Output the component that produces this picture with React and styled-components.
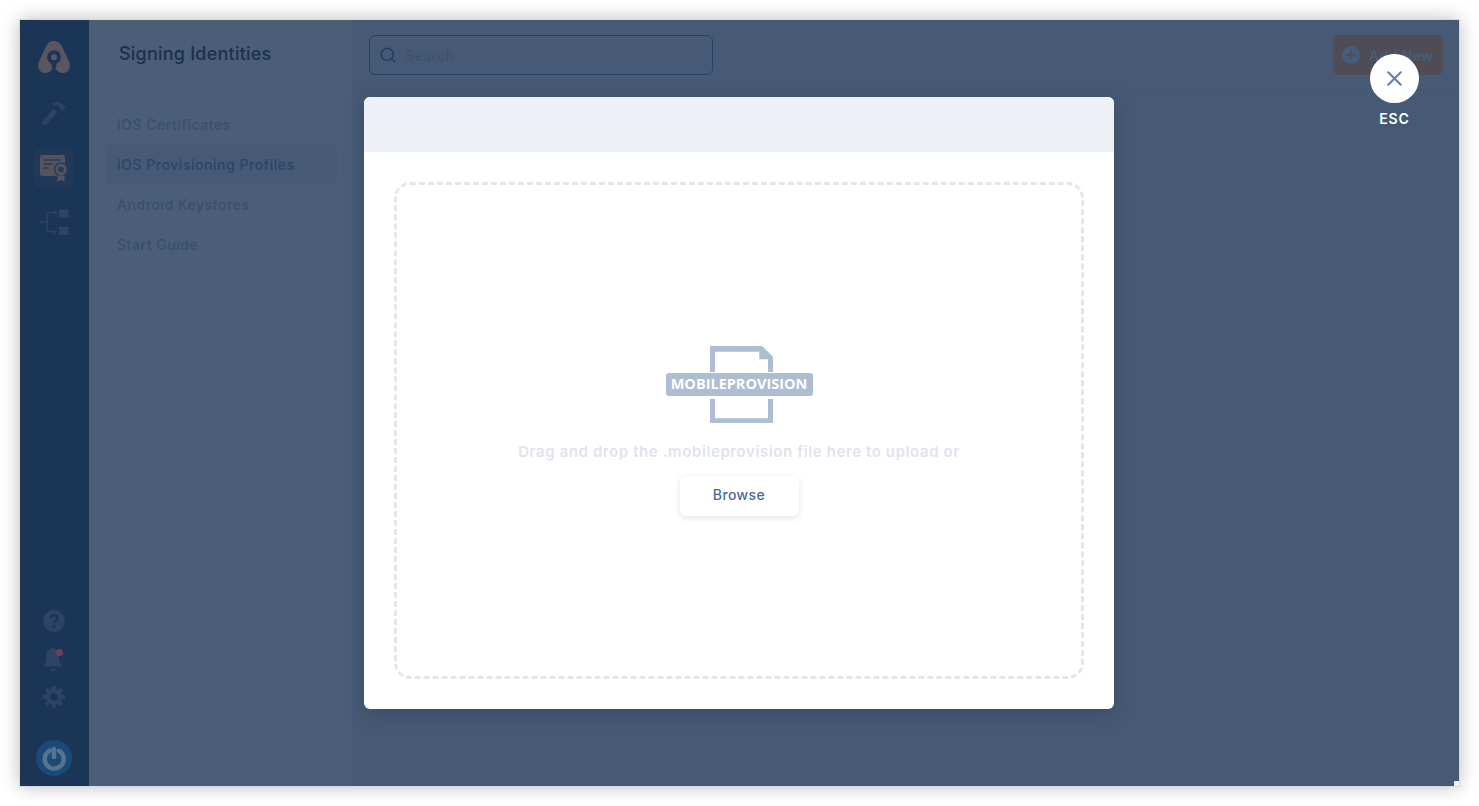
import styled, { createGlobalStyle } from 'styled-components';
import { FiSearch, FiX } from 'react-icons/fi';

const GlobalStyle = createGlobalStyle`
  html, body {
    margin: 0;
    height: 100%;
    background: #fff;
    overflow: hidden;
  }
  body {
    font-family: Inter, "Liberation Sans", sans-serif;
    -webkit-font-smoothing: antialiased;
  }
`;

const menu = ['iOS Certificates', 'iOS Provisioning Profiles', 'Android Keystores', 'Start Guide'];

function Logo() {
  return (
    <svg width="32" height="32" viewBox="0 0 32 32">
      <path fill="#5a5560" d="M16 0c-4 0-6.300 2.200-8 5.500L.9 20.500C-1.600 26.500 2 32 7.300 32c3.300 0 6-1.800 7.200-4.800h3c1.200 3 3.900 4.800 7.200 4.800 5.300 0 8.900-5.500 6.400-11.500L24 5.500C22.300 2.200 20 0 16 0z" />
      <path fill="#1a3556" d="M16 9.500a6.800 6.800 0 0 0-2.800 13l1.100 5h3.400l1.100-5A6.800 6.800 0 0 0 16 9.500z" />
      <circle cx="16" cy="16.300" r="3" fill="#5a5560" />
    </svg>
  );
}

function Hammer() {
  return (
    <svg width="26" height="26" viewBox="0 0 26 26">
      <path fill="#2d4464" d="M1.800 20.800 12.600 8.700l4 3.700L5.400 24.300a2.500 2.500 0 0 1-3.600-3.500z" />
      <path fill="#2d4464" d="M10.500 4.500C13.500 1.200 17.500 1 20 3.200l1.500 1.600.8-.5 2.700 2.600-3.900 4-2.500-2.600.4-1-1.200-1c-2-1.200-4-1.300-6.800-1.800z" />
    </svg>
  );
}

function Certificate() {
  return (
    <svg width="28" height="28" viewBox="0 0 28 28">
      <rect x="0" y="1" width="25" height="21" rx="2" fill="#56525e" />
      <path stroke="#263c5b" strokeWidth="1.600" d="M3.500 6H21M3.500 10h9M3.500 14h5" />
      <circle cx="21" cy="15.500" r="6.500" fill="#56525e" stroke="#263c5b" strokeWidth="1.500" />
      <circle cx="21" cy="15.500" r="2.800" fill="#263c5b" />
      <path fill="#56525e" d="M17.500 21.500h7V28L21 25.800 17.500 28z" />
    </svg>
  );
}

function Flow() {
  return (
    <svg width="30" height="26" viewBox="0 0 30 26">
      <path fill="none" stroke="#2d4464" strokeWidth="1.500" d="M0 13h8M8 5.500a2 2 0 0 1 2-2h6M8 20.500a2 2 0 0 0 2 2h6M8 5.500v15" />
      <path fill="#2d4464" d="M15 1l3.500 2.500L15 6zM15 20l3.500 2.500L15 25zM20 .500h9.500v8H20zM20 18h9.500v8H20z" />
    </svg>
  );
}

function Help() {
  return (
    <svg width="22" height="22" viewBox="0 0 22 22">
      <circle cx="11" cy="11" r="11" fill="#2d4464" />
      <path fill="none" stroke="#1a3556" strokeWidth="2.200" d="M7.500 8.300c0-2 1.500-3.200 3.500-3.200s3.500 1.200 3.500 3c0 2.600-3.500 2.600-3.500 5.200" />
      <circle cx="11" cy="16.500" r="1.400" fill="#1a3556" />
    </svg>
  );
}

function Bell() {
  return (
    <svg width="24" height="24" viewBox="0 0 24 24">
      <path fill="#2d4464" d="M11 .500c1 0 1.800.8 1.800 1.700 3 1 4.200 3.800 4.200 7v4c0 2 2 3.500 3 5v1H1v-1c1-1.500 3-3 3-5v-4c0-3.200 1.200-6 4.200-7C8.200 1.300 10 .500 11 .500z" />
      <path fill="#2d4464" d="M8.500 21.500h5a2.500 2.500 0 0 1-5 0z" />
      <circle cx="17.500" cy="5.500" r="3.500" fill="#6e3f56" />
    </svg>
  );
}

function Gear() {
  return (
    <svg width="22" height="22" viewBox="0 0 22 22">
      <circle cx="11" cy="11" r="6" fill="none" stroke="#2d4464" strokeWidth="4.500" />
      <path stroke="#2d4464" strokeWidth="4" d="M11 0v4M11 18v4M0 11h4M18 11h4M3.200 3.200l2.800 2.800M16 16l2.800 2.800M3.200 18.800 6 16M16 6l2.800-2.800" />
    </svg>
  );
}

function Power() {
  return (
    <svg width="36" height="36" viewBox="0 0 36 36">
      <circle cx="18" cy="18" r="18" fill="#1b4a78" />
      <path fill="none" stroke="#56738f" strokeWidth="4.500" strokeLinecap="round" d="M14 10.500a9.500 9.500 0 1 0 9 .3" />
      <path stroke="#56738f" strokeWidth="4.500" strokeLinecap="round" d="M18 9v8" />
    </svg>
  );
}

function PlusCircle() {
  return (
    <svg width="18" height="18" viewBox="0 0 18 18">
      <circle cx="9" cy="9" r="9" fill="#445d7c" />
      <path stroke="#4f4c55" strokeWidth="2" d="M9 4.500v9M4.500 9h9" />
    </svg>
  );
}

export default function App() {
  return (
    <Page>
      <GlobalStyle />
      <Window>
        <Rail>
          <RailLogo><Logo /></RailLogo>
          <RailIcon $h={38}><Hammer /></RailIcon>
          <RailActive><Certificate /></RailActive>
          <RailIcon $h={54} $top={7}><Flow /></RailIcon>
          <RailSpacer />
          <RailIcon $h={38}><Help /></RailIcon>
          <RailIcon $h={38}><Bell /></RailIcon>
          <RailIcon $h={38}><Gear /></RailIcon>
          <RailPower><Power /></RailPower>
        </Rail>

        <Panel>
          <PanelTitle>Signing Identities</PanelTitle>
          <Menu>
            {menu.map((item, i) => (
              <MenuItem key={item} $active={i === 1}>{item}</MenuItem>
            ))}
          </Menu>
        </Panel>

        <Main>
          <TopBar>
            <SearchBox>
              <FiSearch size={18} color="#1f3f68" strokeWidth={2.2} />
              <SearchText>Search</SearchText>
            </SearchBox>
            <AddButton><PlusCircle />Add New</AddButton>
          </TopBar>
        </Main>

        <Overlay>
          <Modal>
            <ModalHeader />
            <ModalBody>
              <DropZone>
                <FileBadge>
                  <FileIcon width="63" height="77" viewBox="0 0 63 77">
                    <path
                      fill="#adbdd2"
                      d="M0 0H52L63 10.700V26H58V13.300H49.300V5.700H5V26H0ZM0 53H5V72.300H58V53H63V76a1 1 0 0 1-1 1H1a1 1 0 0 1-1-1Z"
                    />
                  </FileIcon>
                  <BadgeLabel>MOBILEPROVISION</BadgeLabel>
                </FileBadge>
                <DropText>Drag and drop the .mobileprovision file here to upload or</DropText>
                <BrowseButton>Browse</BrowseButton>
              </DropZone>
            </ModalBody>
          </Modal>
        </Overlay>

        <EscWrap>
          <EscCircle><FiX size={25} color="#5f84ae" strokeWidth={2} /></EscCircle>
          <EscLabel>ESC</EscLabel>
        </EscWrap>
        <ResizeHandle />
      </Window>
    </Page>
  );
}

const Page = styled.div`
  height: 806px;
  padding: 20px;
  box-sizing: border-box;
`;

const Window = styled.div`
  position: relative;
  display: flex;
  width: 1439px;
  height: 766px;
  overflow: hidden;
  background: #475a75;
  box-shadow: 0 0 0 1px #d3dae5, 0 0 18px rgba(0, 0, 0, 0.28);
`;

const Rail = styled.div`
  width: 69px;
  flex: none;
  box-sizing: border-box;
  padding-right: 1px;
  display: flex;
  flex-direction: column;
  align-items: center;
  background: #1a3556;
`;

const RailLogo = styled.div`
  margin-top: 21px;
  height: 32px;
  display: flex;
`;

const RailIcon = styled.div`
  height: ${(p) => p.$h}px;
  margin-top: ${(p) => p.$top || 0}px;
  display: flex;
  align-items: center;
  justify-content: center;
  &:nth-child(2) {
    margin-top: 21px;
  }
`;

const RailActive = styled.div`
  width: 40px;
  height: 40px;
  margin-top: 16px;
  border-radius: 8px;
  background: #213857;
  display: flex;
  align-items: center;
  justify-content: center;
`;

const RailSpacer = styled.div`
  flex: 1;
`;

const RailPower = styled.div`
  height: 36px;
  margin: 24px 0 10px;
  display: flex;
`;

const Panel = styled.div`
  width: 264px;
  flex: none;
  background: #4a5e78;
  border-right: 1px solid #485b76;
  box-sizing: border-box;
`;

const PanelTitle = styled.h1`
  margin: 0;
  padding: 23px 0 0 30px;
  font-size: 18px;
  line-height: 22px;
  font-weight: 500;
  letter-spacing: 0.22px;
  color: #1c304c;
`;

const Menu = styled.div`
  margin: 39px 15px 0 16px;
  display: flex;
  flex-direction: column;
`;

const MenuItem = styled.div`
  height: 40px;
  display: flex;
  align-items: center;
  padding-left: 12px;
  border-radius: 6px;
  font-size: 14px;
  font-weight: 500;
  letter-spacing: 0.55px;
  color: ${(p) => (p.$active ? '#2b4468' : '#3a4f6d')};
  background: ${(p) => (p.$active ? '#465a76' : 'transparent')};
`;

const Main = styled.div`
  flex: 1;
  min-width: 0;
`;

const TopBar = styled.div`
  height: 70px;
  box-sizing: border-box;
  padding: 15px 16px 0 16px;
  border-bottom: 1px solid #465974;
  display: flex;
  justify-content: space-between;
  align-items: flex-start;
`;

const SearchBox = styled.div`
  width: 344px;
  height: 40px;
  box-sizing: border-box;
  border: 1px solid #24416a;
  border-radius: 6px;
  padding-left: 9px;
  display: flex;
  align-items: center;
  gap: 8px;
`;

const SearchText = styled.span`
  font-size: 14px;
  font-weight: 500;
  letter-spacing: 0.4px;
  color: #3d5270;
`;

const AddButton = styled.div`
  width: 110px;
  height: 40px;
  box-sizing: border-box;
  padding-left: 9px;
  border-radius: 6px;
  background: #4f4c55;
  color: #445d7c;
  display: flex;
  align-items: center;
  gap: 9px;
  font-size: 14px;
  font-weight: 600;
  letter-spacing: 0.45px;
`;

const Overlay = styled.div`
  position: absolute;
  inset: 0;
  padding-right: 1px;
  display: flex;
  align-items: center;
  justify-content: center;
`;

const Modal = styled.div`
  width: 750px;
  height: 612px;
  background: #fff;
  border-radius: 6px;
  overflow: hidden;
  display: flex;
  flex-direction: column;
  box-shadow: 0 4px 20px rgba(20, 35, 60, 0.25);
`;

const ModalHeader = styled.div`
  height: 55px;
  flex: none;
  background: #edf0f5;
`;

const ModalBody = styled.div`
  flex: 1;
  padding: 30px;
  display: flex;
`;

const DropZone = styled.div`
  flex: 1;
  box-sizing: border-box;
  border: 3px dashed #e4e6eb;
  border-radius: 16px;
  display: flex;
  flex-direction: column;
  align-items: center;
  justify-content: center;
`;

const FileBadge = styled.div`
  position: relative;
  width: 147px;
  height: 77px;
`;

const FileIcon = styled.svg`
  display: block;
  margin-left: 44px;
`;

const BadgeLabel = styled.span`
  position: absolute;
  left: 0;
  right: 0;
  top: 27px;
  height: 23px;
  border-radius: 3px;
  background: #adbdd2;
  color: #fff;
  font-family: "Open Sans", sans-serif;
  font-size: 14.5px;
  font-weight: 700;
  line-height: 21px;
  text-align: center;
  white-space: nowrap;
`;

const DropText = styled.div`
  margin-top: 19px;
  font-size: 15px;
  line-height: 20px;
  font-weight: 600;
  letter-spacing: 0.6px;
  white-space: nowrap;
  color: #dfe3ec;
`;

const BrowseButton = styled.div`
  margin-top: 14px;
  width: 119px;
  height: 40px;
  box-sizing: border-box;
  padding-bottom: 2px;
  border-radius: 6px;
  background: #fff;
  box-shadow: 0 2px 6px rgba(60, 90, 130, 0.16);
  display: flex;
  align-items: center;
  justify-content: center;
  font-size: 14px;
  font-weight: 500;
  letter-spacing: 0.4px;
  color: #4a6a9b;
`;

const EscWrap = styled.div`
  position: absolute;
  top: 34px;
  right: 40px;
  display: flex;
  flex-direction: column;
  align-items: center;
  gap: 7px;
`;

const EscCircle = styled.div`
  width: 49px;
  height: 49px;
  border-radius: 50%;
  background: #fff;
  display: flex;
  align-items: center;
  justify-content: center;
`;

const EscLabel = styled.div`
  font-size: 14px;
  line-height: 17px;
  font-weight: 600;
  letter-spacing: 0.9px;
  color: #fff;
`;

const ResizeHandle = styled.div`
  position: absolute;
  right: 0;
  bottom: 0;
  width: 5px;
  height: 5px;
  background: #f3f5fa;
`;
